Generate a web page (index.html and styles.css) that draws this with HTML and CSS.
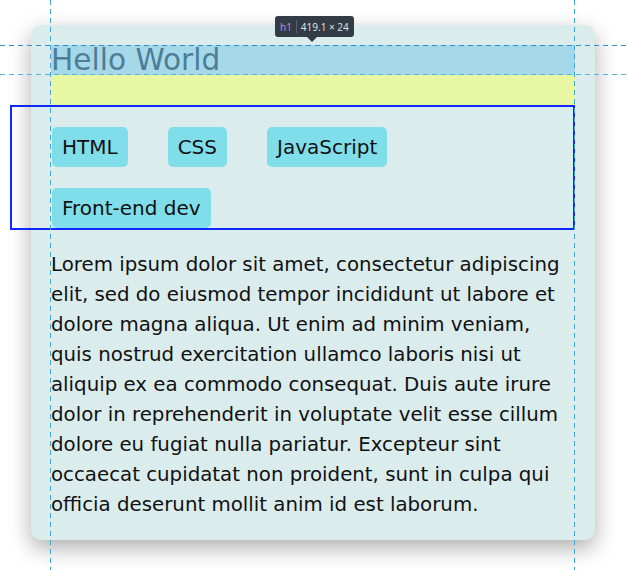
FILE: index.html
```html
<!DOCTYPE html>
<html lang="en">
<head>
<meta charset="utf-8">
<title>Hello World</title>
<link rel="stylesheet" href="styles.css">
</head>
<body>
<div class="card">
  <h1 class="title">Hello World</h1>
  <div class="tags">
    <span class="tag">HTML</span>
    <span class="tag">CSS</span>
    <span class="tag">JavaScript</span>
    <span class="tag">Front-end dev</span>
  </div>
  <p class="text">Lorem ipsum dolor sit amet, consectetur adipiscing elit, sed do eiusmod tempor incididunt ut labore et dolore magna aliqua. Ut enim ad minim veniam, quis nostrud exercitation ullamco laboris nisi ut aliquip ex ea commodo consequat. Duis aute irure dolor in reprehenderit in voluptate velit esse cillum dolore eu fugiat nulla pariatur. Excepteur sint occaecat cupidatat non proident, sunt in culpa qui officia deserunt mollit anim id est laborum.</p>
</div>
<div class="guide guide-v guide-left"></div>
<div class="guide guide-v guide-right"></div>
<div class="guide guide-h guide-top"></div>
<div class="guide guide-h guide-bottom"></div>
<div class="tip"><span class="tip-tag">h1</span><span class="tip-sep"></span><span class="tip-size">419.1 × 24</span></div>
</body>
</html>
```
FILE: styles.css
```css
html, body {
  margin: 0;
  padding: 0;
  background: #ffffff;
}
body {
  width: 628px;
  height: 570px;
  overflow: hidden;
  position: relative;
  font-family: "DejaVu Sans", Verdana, sans-serif;
  color: #111;
}
.card {
  box-sizing: border-box;
  width: 564px;
  margin: 25px 0 0 31px;
  padding: 20px;
  background: #dbeced;
  border-radius: 10px;
  box-shadow: 0 8px 22px rgba(0, 0, 0, 0.32);
}
.title {
  margin: 0;
  font-size: 29.6px;
  line-height: 30px;
  font-weight: normal;
  color: #4d7e95;
  background: #a5d9ea;
  border-bottom: 30px solid #e8f7a1;
}
.tags {
  display: flex;
  flex-wrap: wrap;
  gap: 21px 40px;
  margin-left: -41px;
  padding: 20px 0 0 40px;
  border: 2px solid #1028ff;
}
.tag {
  font-size: 20px;
  padding: 8px 10px;
  background: #80deea;
  border-radius: 5px;
  color: #111;
}
.text {
  margin: 20px 0 0;
  font-size: 19.8px;
  line-height: 30px;
}
.guide {
  position: absolute;
}
.guide-v {
  top: 0;
  width: 1px;
  height: 570px;
  background: repeating-linear-gradient(to bottom, #3ea6d8 0 5px, transparent 5px 9px);
}
.guide-left { left: 50px; }
.guide-right { left: 574px; }
.guide-h {
  left: 0;
  width: 628px;
  height: 1px;
}
.guide-top {
  top: 45px;
  background: repeating-linear-gradient(to right, #2f8fc6 0 5px, transparent 5px 9px);
}
.guide-bottom {
  top: 74px;
  background: repeating-linear-gradient(to right, #55b6e0 0 5px, transparent 5px 9px);
}
.tip {
  position: absolute;
  left: 275px;
  top: 16px;
  height: 21px;
  box-sizing: border-box;
  padding: 0 5px;
  display: flex;
  align-items: center;
  gap: 4px;
  background: #333c44;
  border-radius: 3px;
  font-family: "Open Sans", "DejaVu Sans", sans-serif;
  font-size: 10px;
  line-height: 1;
}
.tip::after {
  content: "";
  position: absolute;
  left: 32px;
  bottom: -5px;
  border-left: 5px solid transparent;
  border-right: 5px solid transparent;
  border-top: 5px solid #333c44;
}
.tip-tag { color: #c48ae6; }
.tip-sep {
  width: 1px;
  height: 13px;
  background: #59626a;
}
.tip-size { color: #e3e6e8; }
```
